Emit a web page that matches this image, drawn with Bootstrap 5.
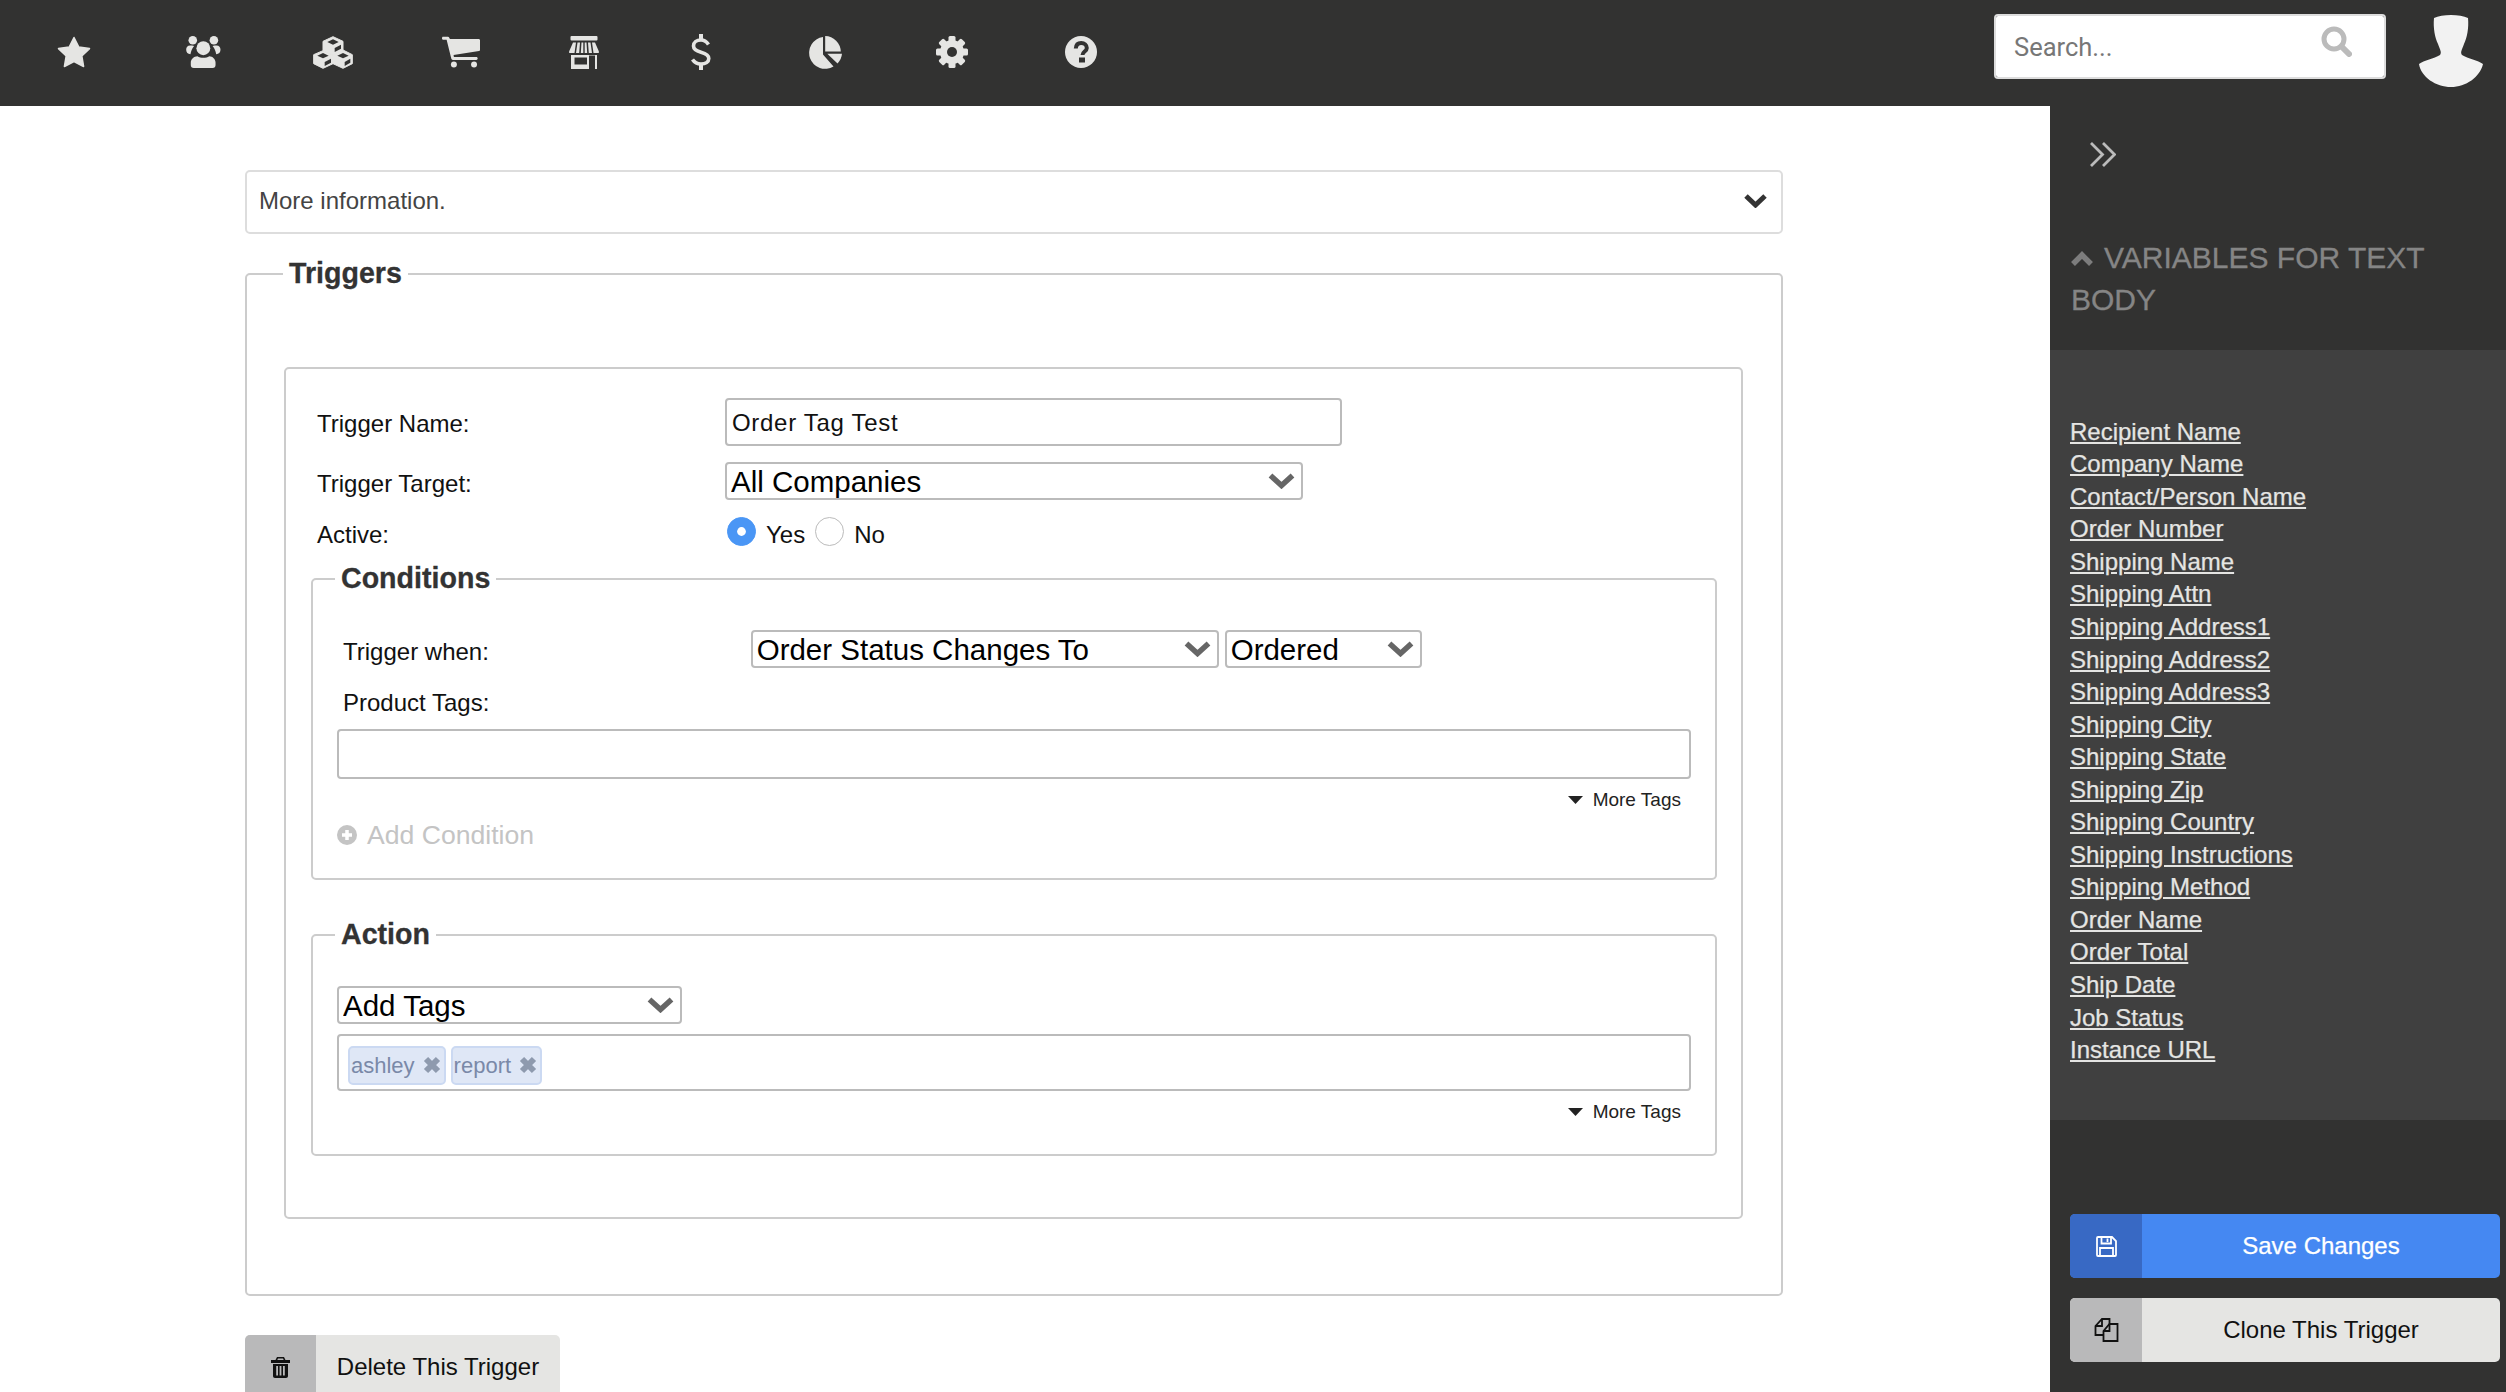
<!DOCTYPE html>
<html lang="en">
<head>
<meta charset="utf-8">
<title>Trigger</title>
<link href="https://cdn.jsdelivr.net/npm/bootstrap@5.3.0/dist/css/bootstrap.min.css" rel="stylesheet">
<style>
html,body{height:100%;}
body{font-family:"Liberation Sans",Arial,sans-serif;font-size:24px;color:#111;overflow:hidden;background:#fff;}
.pg-wrap{height:1392px;overflow:hidden;}
.hdr{height:106px;background:#323231;}
.topnav{display:grid;grid-template-columns:129px 129.5px 129px 125.5px 119.5px 120.5px 125.5px 127px 128px;margin-left:9.5px;height:106px;}
.topnav a{display:flex;align-items:center;justify-content:center;height:104px;}
.topnav a.nudge-r{padding-left:3px;}
.topnav a.nudge-l{padding-right:3px;}
.topnav svg{fill:#e5e5e3;display:block;}
.hdr-right{align-self:flex-start;padding-top:14px;}
.srch{width:392px;height:65px;margin-right:32px;}
.srch .form-control{height:65px;border:2px solid #ddd;border-radius:4px;padding:0 0 0 18px;font-family:Roboto,sans-serif;font-size:25.5px;}
.srch .form-control::placeholder{color:#777;opacity:1;}
.srch svg{position:absolute;right:34px;top:12px;}
.avatar-ic{margin-right:22px;}
.main-col{width:2050px;padding-left:245px;}
.side-col{width:456px;background:#323231;}
.info-bar{width:1538px;height:63.5px;border:2px solid #ddd;border-radius:5px;margin-top:64px;padding:0 14px 2px 12px;color:#444;}
fieldset.fs-outer,fieldset.fs-in{border:2px solid #ccc;border-radius:5px;padding:0;margin:0;}
fieldset legend{float:none;width:auto;font-size:28.6px;font-weight:700;line-height:32px;padding:0 6px 2px;margin:0;color:#333;-webkit-text-stroke:.3px #333;}
fieldset.fs-outer{width:1538px;margin-top:23.5px;padding-bottom:75px;}
.fs-outer>legend{margin-left:36px;}
.trg-box{border:2px solid #ccc;border-radius:5px;margin:76px 38px 0 37px;padding:29px 24px 61px 25px;}
.lbl-m{padding-left:6px;width:414px;flex:none;}
.lbl-p{padding-top:3px;}
.lbl-p2{padding-top:6px;line-height:30px;}
.txt-in{width:617px;height:48px;border:2px solid #bbb;border-radius:4px;padding:2px 0 0 5px;font-size:24px;letter-spacing:.7px;color:#111;}
.sel-x{height:38px;border:2px solid #bbb;border-radius:4px;padding:1px 30px 0 4px;font-size:29.5px;line-height:33px;color:#000;font-family:"Liberation Sans",Arial,sans-serif;background-color:#fff;background-image:url("data:image/svg+xml,%3Csvg xmlns='http://www.w3.org/2000/svg' viewBox='0 0 27 16'%3E%3Cpath d='M2.5 2.5 13.500 12.500 24.500 2.500' fill='none' stroke='%23666' stroke-width='5.500'/%3E%3C/svg%3E");background-repeat:no-repeat;background-position:right 6px center;background-size:27px 16px;}
.sel-1{width:578px;}
.sel-2{width:468px;}
.sel-3{width:197px;margin-left:6px;}
.sel-4{width:345px;}
.rad-row{height:36px;margin-top:17px;}
.rad-row .lbl-m{line-height:36px;width:416px;}
.rad-row .form-check-input{width:29px;height:29px;margin:0;flex:none;border-color:#bbb;}
.rad-row .form-check-input:checked{background-color:#4a96f5;border-color:#4a96f5;background-image:url("data:image/svg+xml,%3Csvg xmlns='http://www.w3.org/2000/svg' viewBox='-4 -4 8 8'%3E%3Ccircle r='1.3' fill='%23fff'/%3E%3C/svg%3E");}
.rad-txt{line-height:36px;margin:0 10px 0 10px;}
fieldset.fs-cond{margin-top:9px;}
fieldset.fs-act{margin-top:38px;}
.fs-in>legend{margin-left:22px;}
.fs-body{padding:34px 24px 27.5px 24px;}
.fs-act .fs-body{padding-bottom:31px;}
.tag-area{border:2px solid #bbb;border-radius:4px;}
.tag-h1{height:50px;margin-top:12px;}
.tag-h2{height:57px;margin-top:10px;padding:5px 0 0 9px;gap:5px;}
.prod-lbl{padding-left:6px;line-height:29px;margin-top:20px;}
.more-t{font-size:19px;line-height:23px;color:#222;padding-right:10px;gap:10px;margin-top:9px;}
.add-c{font-size:26.6px;line-height:32px;color:#c4c4c4;margin-top:7.5px;gap:10px;}
.tgchip{height:39px;border:2px solid #cbd9f2;border-radius:5px;background:#dfe7f6;color:#7a89a8;font-size:22px;line-height:35px;padding:0 3px 0 0;gap:8px;}
.tgchip span{padding-left:1px;}
.del-btn{margin-top:39px;height:64px;width:315px;border:0;padding:0;border-radius:5px;overflow:hidden;background:#e5e5e3;color:#111;font-size:24px;}
.del-btn:hover,.act-b2:hover{background:#e5e5e3;color:#111;}
.ic-cell{width:71px;height:64px;flex:none;background:#b9b9ba;}
.chev-bk{margin:36px 0 0 40px;height:25px;}
.side-hd{margin:70px 20px 30px 21px;font-size:30px;line-height:41.6px;color:#858585;font-weight:400;-webkit-text-stroke:.3px #858585;}
.side-hd svg{margin-right:11px;vertical-align:2px;}
.var-panel{background:#404040;padding:65.5px 20px 53.5px;}
.var-panel a{display:block;width:fit-content;font-size:24px;line-height:32.55px;color:#e5e5e3;-webkit-text-stroke:.25px #e5e5e3;}
.act-wrap{margin:94px 6px 0 20px;gap:20px;}
.act-b{width:430px;height:64px;border:0;padding:0;border-radius:5px;overflow:hidden;font-size:24px;}
.act-b1{background:#4588f2;color:#fff;-webkit-text-stroke:.25px #fff;}
.act-b1:hover{background:#4588f2;color:#fff;}
.act-b1 .ic-cell{width:72px;background:#3869c4;}
.act-b2{background:#e5e5e3;color:#111;}
.act-b2 .ic-cell{width:72px;}
</style>
</head>
<body>
<div class="pg-wrap d-flex flex-column">
  <header class="hdr d-flex justify-content-between align-items-center flex-none">
    <nav class="topnav">
      <a href="#"><svg width="34" height="32" viewBox="0 0 34 32"><path d="M17 1.500 21.800 11 32.500 12.600 24.800 20 26.600 30.500 17 25.500 7.400 30.500 9.200 20 1.500 12.600 12.200 11Z" stroke="#e5e5e3" stroke-width="1.500" stroke-linejoin="round"/></svg></a>
      <a href="#"><svg width="35" height="33" viewBox="0 0 105 100"><circle cx="20" cy="13" r="13"/><circle cx="84" cy="13" r="13"/><path d="M12 29C4 29 0 34 0 42 0 50 5 55 13 55 15 46 17 38 24 30 20 29 16 29 12 29Z"/><path d="M92 29C100 29 104 34 104 42 104 50 99 55 91 55 89 46 87 38 80 30 84 29 88 29 92 29Z"/><circle cx="52" cy="37" r="21"/><path d="M14 88V80C14 70 24 61 34 61 44 68 60 68 70 61 80 61 89 70 89 80V88Q89 97 80 97H23Q14 97 14 88Z"/></svg></a>
      <a href="#"><svg width="40" height="33" viewBox="0 0 120 99"><g stroke="#e5e5e3" stroke-width="3" stroke-linejoin="round"><path d="M60 2 90 16V44L60 58 30 44V16Z"/><path d="M30 44 60 58V83L30 97 2 83V56Z"/><path d="M90 42 118 56V83L90 97 60 83V56Z"/></g><g style="fill:#323231"><path d="M60 10 77 18 60 26 43 18Z"/><path d="M65 36 84 26V38L65 48Z"/><path d="M30 51 47 59 30 67 13 59Z"/><path d="M35 78 54 68V80L35 90Z"/><path d="M90 51 107 59 90 67 73 59Z"/><path d="M95 78 112 68V80L95 90Z"/></g></svg></a>
      <a href="#" class="nudge-r"><svg width="38" height="32" viewBox="0 0 115 96"><path d="M3 2H18C20 2 21 3 22 5L24 9H111C113 9 115 11 115 13V42C115 44 114 45 112 45L35 57 36 63H104C106 63 108 65 108 67 108 70 106 72 104 72H33C30 72 29 70 28 68L14 11H3C1 11 0 9 0 6.500 0 4 1 2 3 2Z"/><circle cx="36" cy="86" r="9"/><circle cx="97" cy="86" r="9"/></svg></a>
      <a href="#" class="nudge-r"><svg width="30" height="33" viewBox="0 0 30 33"><rect x="1.500" y="0" width="27" height="4.500" rx="1"/><path d="M4 6.500H7L5.500 17H.8C0 17 0 16 .2 15.200ZM8.500 6.500H11L10.200 17H7ZM12.500 6.500H14.300V17H11.800ZM15.700 6.500H17.500L18.200 17H15.700ZM19 6.500H21.500L23 17H19.800ZM23 6.500H26L29.800 15.200C30 16 30 17 29.200 17H24.500Z"/><path d="M2 19H28V33H26V19.500H20V33H2ZM5.500 21.500V28.500H18V21.500Z" fill-rule="evenodd"/></svg></a>
      <a href="#" class="nudge-l"><svg width="20" height="36" viewBox="0 0 20 36" stroke="#e5e5e3" style="fill:none"><path d="M10 0V6M10 30V36" stroke-width="4"/><path d="M17.500 10.500C15.500 7.500 13 6 10 6 5.500 6 2.500 8.500 2.500 12 2.500 15.500 5.500 17 10 18.200 14.500 19.400 17.800 21 17.800 24.500 17.800 28 14.500 30 10 30 6.500 30 3.500 28.500 1.500 25.500" stroke-width="3.600"/></svg></a>
      <a href="#"><svg width="34" height="33" viewBox="0 0 34 33"><path d="M15 1A16 16 0 1 0 25.500 30.500L15 18.500Z"/><path d="M17.200 0A16 16 0 0 1 32.800 15.500H17.200Z"/><path d="M19.300 17.800H34A16 16 0 0 1 29.500 27.500Z"/></svg></a>
      <a href="#"><svg width="32" height="32" viewBox="0 0 32 32"><g><rect x="12.500" y="0" width="7" height="32" rx="1.500"/><rect x="12.500" y="0" width="7" height="32" rx="1.500" transform="rotate(45 16 16)"/><rect x="12.500" y="0" width="7" height="32" rx="1.500" transform="rotate(90 16 16)"/><rect x="12.500" y="0" width="7" height="32" rx="1.500" transform="rotate(135 16 16)"/></g><circle cx="16" cy="16" r="8.500" stroke="#e5e5e3" stroke-width="7" style="fill:none"/><circle cx="16" cy="16" r="5" style="fill:#323231"/></svg></a>
      <a href="#" class="nudge-r"><svg width="32" height="32" viewBox="0 0 32 32"><circle cx="16" cy="16" r="16"/><path d="M10.800 12.500C11 9 13 7 16.200 7 19.500 7 21.800 9 21.800 12 21.800 15.500 17.500 15.500 17.500 19" stroke="#323231" stroke-width="4" style="fill:none"/><rect x="14" y="21.500" width="6" height="5" style="fill:#323231"/></svg></a>
    </nav>
    <div class="hdr-right d-flex align-items-start">
      <div class="srch position-relative">
        <input class="form-control" type="text" placeholder="Search...">
        <svg width="31" height="31" viewBox="0 0 31 31" fill="none" stroke="#bbb"><circle cx="13" cy="13" r="10" stroke-width="5"/><path d="M20.500 20.500 28 28" stroke-width="6" stroke-linecap="round"/></svg>
      </div>
      <svg class="avatar-ic" width="66" height="73" viewBox="0 0 66 73" fill="#f2f2f2"><path d="M16 4C24 0 42 0 50 4 51 14 49 24 46 30 44 36 42 38 44 41 50 45 60 46 65 50 62 63 48 73 33 73 18 73 3 63 1 50 6 46 16 45 22 41 24 38 22 36 20 30 17 24 15 14 16 4Z"/></svg>
    </div>
  </header>
  <div class="d-flex flex-grow-1 overflow-hidden">
    <main class="main-col">
      <div class="info-bar d-flex justify-content-between align-items-center">
        <span>More information.</span>
        <svg width="23" height="14" viewBox="0 0 23 14" fill="none" stroke="#333" stroke-width="5"><path d="M2 2 11.500 11 21 2"/></svg>
      </div>
      <fieldset class="fs-outer">
        <legend>Triggers</legend>
        <div class="trg-box">
          <div class="d-flex align-items-center">
            <label class="lbl-m lbl-p">Trigger Name:</label>
            <input class="txt-in" type="text" value="Order Tag Test">
          </div>
          <div class="d-flex align-items-center mt-3">
            <label class="lbl-m lbl-p2">Trigger Target:</label>
            <select class="form-select sel-x sel-1"><option>All Companies</option></select>
          </div>
          <div class="d-flex rad-row">
            <label class="lbl-m">Active:</label>
            <input class="form-check-input" type="radio" name="act" checked>
            <span class="rad-txt">Yes</span>
            <input class="form-check-input" type="radio" name="act">
            <span class="rad-txt">No</span>
          </div>
          <fieldset class="fs-in fs-cond">
            <legend>Conditions</legend>
            <div class="fs-body">
              <div class="d-flex align-items-center">
                <label class="lbl-m lbl-p2" style="width:413.7px">Trigger when:</label>
                <select class="form-select sel-x sel-2"><option>Order Status Changes To</option></select>
                <select class="form-select sel-x sel-3"><option>Ordered</option></select>
              </div>
              <div class="prod-lbl">Product Tags:</div>
              <div class="tag-area tag-h1"></div>
              <div class="more-t d-flex justify-content-end align-items-center">
                <svg width="15" height="8" viewBox="0 0 15 8" fill="#222"><path d="M0 0H15L7.500 8Z"/></svg>
                <span>More Tags</span>
              </div>
              <div class="add-c d-flex align-items-center">
                <svg width="20" height="20" viewBox="0 0 20 20"><circle cx="10" cy="10" r="10" fill="#c4c4c4"/><path d="M10 5V15M5 10H15" stroke="#fff" stroke-width="3.500"/></svg>
                <span>Add Condition</span>
              </div>
            </div>
          </fieldset>
          <fieldset class="fs-in fs-act">
            <legend>Action</legend>
            <div class="fs-body">
              <select class="form-select sel-x sel-4"><option>Add Tags</option></select>
              <div class="tag-area tag-h2 d-flex align-items-center">
                <div class="tgchip d-flex align-items-center"><span>ashley</span><svg width="18" height="18" viewBox="0 0 18 18" stroke="#8e9aae" stroke-width="6"><path d="M3 3 15 15M15 3 3 15"/></svg></div>
                <div class="tgchip d-flex align-items-center"><span>report</span><svg width="18" height="18" viewBox="0 0 18 18" stroke="#8e9aae" stroke-width="6"><path d="M3 3 15 15M15 3 3 15"/></svg></div>
              </div>
              <div class="more-t d-flex justify-content-end align-items-center">
                <svg width="15" height="8" viewBox="0 0 15 8" fill="#222"><path d="M0 0H15L7.500 8Z"/></svg>
                <span>More Tags</span>
              </div>
            </div>
          </fieldset>
        </div>
      </fieldset>
      <button class="btn del-btn d-flex align-items-center" type="button">
        <span class="ic-cell d-flex align-items-center justify-content-center">
          <svg width="19" height="21" viewBox="0 0 19 21" fill="#111"><path d="M6 0H13L14.500 3H19V6H0V3H4.500ZM7 1.500 6.300 3H12.700L12 1.500ZM2 7H17V19C17 20.200 16.200 21 15 21H4C2.800 21 2 20.200 2 19ZM5.200 9V18.500H7V9ZM8.600 9V18.500H10.400V9ZM12 9V18.500H13.800V9Z" fill-rule="evenodd"/></svg>
        </span>
        <span class="ms-auto me-auto">Delete This Trigger</span>
      </button>
    </main>
    <aside class="side-col d-flex flex-column">
      <div class="chev-bk"><svg class="d-block" width="26" height="25" viewBox="0 0 26 25" fill="none" stroke="#bbb" stroke-width="2.800"><path d="M1 1 12.500 12.500 1 24M13 1 24.500 12.500 13 24"/></svg></div>
      <h5 class="side-hd"><svg width="22" height="15" viewBox="0 0 22 15" fill="none" stroke="#7d7d7d" stroke-width="5.500"><path d="M2 13 11 4 20 13"/></svg>VARIABLES FOR TEXT BODY</h5>
      <div class="var-panel">
        <a href="#">Recipient Name</a>
        <a href="#">Company Name</a>
        <a href="#">Contact/Person Name</a>
        <a href="#">Order Number</a>
        <a href="#">Shipping Name</a>
        <a href="#">Shipping Attn</a>
        <a href="#">Shipping Address1</a>
        <a href="#">Shipping Address2</a>
        <a href="#">Shipping Address3</a>
        <a href="#">Shipping City</a>
        <a href="#">Shipping State</a>
        <a href="#">Shipping Zip</a>
        <a href="#">Shipping Country</a>
        <a href="#">Shipping Instructions</a>
        <a href="#">Shipping Method</a>
        <a href="#">Order Name</a>
        <a href="#">Order Total</a>
        <a href="#">Ship Date</a>
        <a href="#">Job Status</a>
        <a href="#">Instance URL</a>
      </div>
      <div class="act-wrap d-flex flex-column">
        <button class="btn act-b act-b1 d-flex align-items-center" type="button">
          <span class="ic-cell d-flex align-items-center justify-content-center">
            <svg width="21" height="21" viewBox="0 0 21 21" fill="none" stroke="#fff" stroke-width="1.800"><path d="M1 2C1 1.400 1.400 1 2 1H16L20 5V19C20 19.600 19.600 20 19 20H2C1.400 20 1 19.600 1 19Z"/><path d="M5.500 1V7.500H15V1M4 20V12H17V20"/><path d="M11.500 2.500V6"/></svg>
          </span>
          <span class="flex-grow-1 text-center">Save Changes</span>
        </button>
        <button class="btn act-b act-b2 d-flex align-items-center" type="button">
          <span class="ic-cell d-flex align-items-center justify-content-center">
            <svg width="25" height="24" viewBox="0 0 25 24" fill="none" stroke="#111" stroke-width="1.800"><path d="M9 17H1.500V8L8 1H15.500V6"/><path d="M9.500 23V13L15.500 6H23.500V23Z"/><path d="M9.500 13H15.500V6M1.500 8H8V1"/></svg>
          </span>
          <span class="flex-grow-1 text-center">Clone This Trigger</span>
        </button>
      </div>
    </aside>
  </div>
</div>
<script src="https://cdn.jsdelivr.net/npm/bootstrap@5.3.0/dist/js/bootstrap.bundle.min.js"></script>
</body>
</html>
